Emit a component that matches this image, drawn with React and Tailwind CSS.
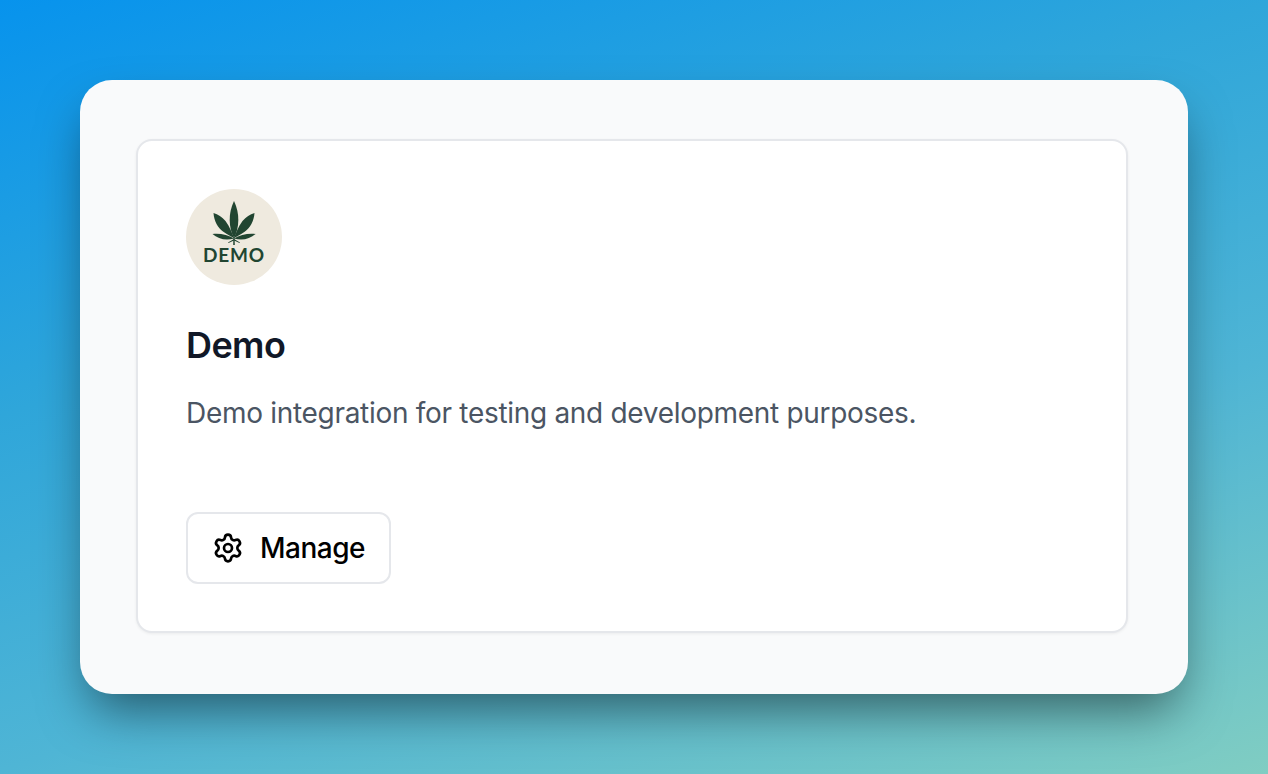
import { Settings } from "lucide-react";

function Logo() {
  return (
    <div className="flex h-24 w-24 shrink-0 flex-col items-center rounded-full bg-[#efeadf] pt-[11px]">
      <svg width="46" height="46" viewBox="-23 -37 46 46" className="block" aria-hidden="true">
        <g fill="#214531">
          <path d="M0 1C-5.5 -9 -6 -24 0 -36C6 -24 5.5 -9 0 1Z" />
          <path d="M0 1C-2 -4 -4 -10 -8.5 -16C-12 -20 -16 -22.5 -20.5 -24C-20 -16 -16 -9 -11 -5.5C-7 -2.5 -3 -0.5 0 1Z" />
          <path d="M0 1C2 -4 4 -10 8.5 -16C12 -20 16 -22.5 20.5 -24C20 -16 16 -9 11 -5.5C7 -2.5 3 -0.5 0 1Z" />
          <path d="M0 1.5C-6 -2 -14 -4 -21.5 -3C-16 2 -8 4 0 1.5Z" />
          <path d="M0 1.5C6 -2 14 -4 21.5 -3C16 2 8 4 0 1.5Z" />
          <path d="M-0.6 0H0.6L0.8 8H-0.8Z" />
          <path d="M0 2L-6 5.5L-5.5 6L0 3.5L5.5 6L6 5.5Z" />
        </g>
      </svg>
      <span className="mt-[-1px] font-['Lato',sans-serif] text-[19px] leading-[20px] font-bold tracking-[0.8px] text-[#214531]">DEMO</span>
    </div>
  );
}

export default function App() {
  return (
    <div className="flex min-h-[774px] w-full bg-[linear-gradient(162deg,#0793ed_0%,#2fa6da_35%,#4fb5d5_65%,#80cdc2_100%)] p-20 font-['Inter',sans-serif]">
      <div className="flex h-[614px] w-[1108px] flex-col rounded-[32px] bg-[#f9fafb] px-14 pt-[59px] shadow-[0_25px_50px_-10px_rgba(0,0,0,0.5)]">
        <div className="flex h-[494px] w-[992px] flex-col rounded-2xl border-2 border-[#e5e7eb] bg-white pt-12 pl-12 shadow-[0_1px_3px_rgba(0,0,0,0.06)]">
          <Logo />
          <h2 className="mt-[38px] text-[36px] leading-[44px] font-semibold tracking-[-0.6px] text-[#111827]">Demo</h2>
          <p className="mt-[28px] text-[28px] leading-9 tracking-[-0.3px] text-[#4b5563]">Demo integration for testing and development purposes.</p>
          <button className="mt-[81px] flex h-[72px] w-[205px] items-center gap-[16px] rounded-xl border-2 border-[#e5e7eb] bg-white pl-[24px] text-[28px] font-medium tracking-[-0.5px] text-black">
            <Settings size={32} strokeWidth={2} />
            <span>Manage</span>
          </button>
        </div>
      </div>
    </div>
  );
}
